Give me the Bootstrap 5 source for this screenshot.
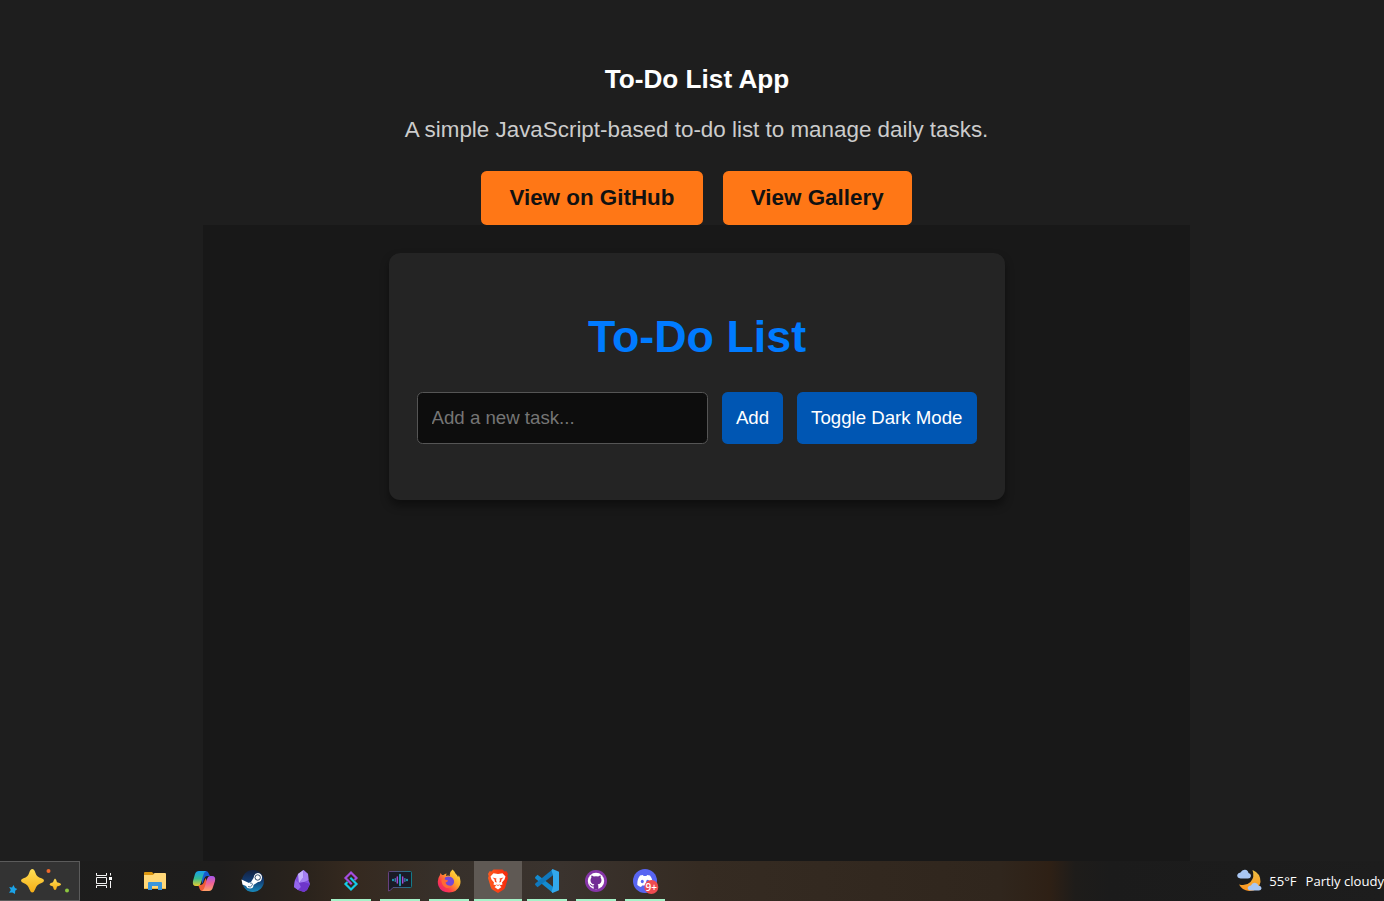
<!DOCTYPE html>
<html lang="en" data-bs-theme="dark">
<head>
<meta charset="utf-8">
<meta name="viewport" content="width=device-width, initial-scale=1">
<title>To-Do List App</title>
<link href="https://cdn.jsdelivr.net/npm/bootstrap@5.3.0/dist/css/bootstrap.min.css" rel="stylesheet">
<style>
html,body{height:100%}
body{background:#1e1e1e;font-family:"Liberation Sans",Arial,sans-serif;font-size:22.4px;overflow:hidden}
.page{padding-left:9px;padding-top:64px;min-height:0}
.title{font-size:26.2px;line-height:30px;color:#fff;margin-bottom:21px;padding-left:1px}
.lede{line-height:30px;color:#ccc;margin-bottom:26px}
.links{gap:20px}
.btn-orange{--bs-btn-bg:#ff7716;--bs-btn-color:#111;--bs-btn-hover-bg:#ff8a38;--bs-btn-hover-color:#111;--bs-btn-font-size:22.4px;--bs-btn-padding-x:28.2px;--bs-btn-padding-y:14px;--bs-btn-border-radius:5.6px;--bs-btn-border-width:0;font-weight:700;line-height:26px}
.demo{width:987px;background:#181818;padding-top:28px}
.todo{width:616px;height:247px;background:#242424;border:0;border-radius:11.2px;padding:57px 28px 0;box-shadow:0 5.6px 8.4px rgba(0,0,0,.4)}
.todo h1{font-size:44.8px;line-height:52px;color:#007bff;margin-bottom:30px;padding-left:1px}
.todo form{gap:14px}
.todo .form-control{height:52px;background:#0d0d0d;border:1px solid #555;border-radius:5.6px;padding:0 14px;font-size:18.67px;color:#fff}
.todo .form-control::placeholder{color:#757575}
.btn-blue{--bs-btn-bg:#0056b3;--bs-btn-color:#fff;--bs-btn-hover-bg:#0064cf;--bs-btn-hover-color:#fff;--bs-btn-font-size:18.67px;--bs-btn-padding-x:14px;--bs-btn-padding-y:0;--bs-btn-border-radius:5.6px;--bs-btn-border-width:0;height:52px;flex:none}
.taskbar{height:40px;background:linear-gradient(90deg,#1c1c1c 0,#1e1d1c 220px,#2a231c 305px,#35291f 350px,#37302a 440px,#3a332e 560px,#352b22 700px,#30261d 1000px,#2e2015 1050px,#1e1c1a 1075px,#1b1b1b 1110px,#1d1d1d 100%)}
.search{width:80px;background:#333;border:1px solid #5b5b5b;border-left:0}
.task{width:48px;height:40px;margin-right:1px}
.task svg{width:24px;height:24px}
.first{margin-right:3px}
.open{background:linear-gradient(#a6f2c8,#a6f2c8) 50% 100%/40px 2px no-repeat}
.active-app{background:linear-gradient(#a6f2c8,#a6f2c8) 50% 100%/48px 2px no-repeat,#5f5954}
.weather{font:13.1px/16px "Open Sans","Noto Sans",sans-serif;color:#fff;white-space:nowrap}
.weather svg{margin-right:7px}
.temp{margin-right:9px}
</style>
</head>
<body class="d-flex flex-column">
<main class="page flex-grow-1 d-flex flex-column align-items-center">
  <h3 class="title fw-bold">To-Do List App</h3>
  <p class="lede">A simple JavaScript-based to-do list to manage daily tasks.</p>
  <div class="links d-flex">
    <a class="btn btn-orange" href="#">View on GitHub</a>
    <a class="btn btn-orange" href="#">View Gallery</a>
  </div>
  <section class="demo flex-grow-1">
    <div class="card todo mx-auto">
      <h1 class="fw-bold text-center">To-Do List</h1>
      <form class="d-flex">
        <input class="form-control" type="text" placeholder="Add a new task...">
        <button class="btn btn-blue" type="button">Add</button>
        <button class="btn btn-blue" type="button">Toggle Dark Mode</button>
      </form>
    </div>
  </section>
</main>
<footer class="taskbar d-flex flex-shrink-0 align-items-center">
  <div class="search h-100">
    <svg class="d-block" width="79" height="38" viewBox="0 1 79 38"><defs><linearGradient id="gold" x2="0" y2="1"><stop stop-color="#ffdf55"/><stop offset="1" stop-color="#f6ae16"/></linearGradient></defs>
      <path fill="url(#gold)" d="M32.300 8Q34.300 8 35.300 11.500Q36.500 16 41.500 17.200Q44 18 44 19.500Q44 21 41.500 22Q36.500 23.500 35.300 28Q34 31.500 32.300 31.500T29.300 28Q28 23.500 23.500 22Q21 21 21 19.500T23.500 17.200Q28 16 29.300 11.500Q30.300 8 32.300 8Z"/>
      <path fill="url(#gold)" d="M55 17.500Q56.300 18 57 21.300Q61 22.300 61 23.500T57 25.500Q56.300 29 55 29T53 25.500Q49.500 24.700 49.500 23.500T53 21.300Q54 18 55 17.500Z"/>
      <path fill="#1ba4e9" d="M13.500 24L15 27L17.300 28L15.200 29.700L15 33L12.300 31.400L9 31.700L10.800 29L9.200 26L12 26.500Z"/><circle cx="48.500" cy="10" r="2" fill="#f26a2a"/><circle cx="67" cy="29.500" r="2" fill="#8cc63f"/></svg>
  </div>
  <div class="task first d-flex align-items-center justify-content-center">
    <svg viewBox="0 0 24 24" fill="none" stroke="#f4f4f4"><path d="M4.500 4V6.500H14.500V4M4.500 19V16.500H14.500V19M4.500 8.500H14.500V14.500H4.500ZM18.500 4V6.500M18.500 12V19"/><path fill="#fff" stroke="none" d="M17 8h3v3h-3z"/></svg>
  </div>
  <div class="task d-flex align-items-center justify-content-center">
    <svg viewBox="0 0 24 24"><path fill="#dc9710" d="M1 4Q1 3 2 3H9L11 5V8H1Z"/><path fill="#ffd878" d="M1 6H10L11.500 4H22Q23 4 23 5V20H1Z"/><path fill="#f0b63b" d="M1 19H23V20H1Z"/><path fill="#3b96dc" d="M5 14Q5 13 6 13H18Q19 13 19 14V21H15V17H9V21H5Z"/></svg>
  </div>
  <div class="task d-flex align-items-center justify-content-center">
    <svg viewBox="0 0 24 24"><defs><linearGradient id="cp1" x2="0" y2="1"><stop stop-color="#169ff0"/><stop offset=".5" stop-color="#35bd91"/><stop offset="1" stop-color="#e8cb2d"/></linearGradient><linearGradient id="cp2" x2="0" y2="1"><stop stop-color="#a456ed"/><stop offset=".5" stop-color="#f06494"/><stop offset="1" stop-color="#ffa168"/></linearGradient></defs><path fill="#165bd0" d="M7 2H14Q16 2 17 5L18 7H15Q13 7 12 10L10.500 15L8 5Z"/><path fill="#f05c37" d="M17 22H10Q8 22 7 18L6 16H9Q11 16 12 13L13.500 9L17 17Z"/><path fill="url(#cp1)" d="M7 2H14Q12 3 11 7L9 14Q8 17 6 17H4Q0 17 1 12L3 5Q4 2 7 2Z"/><path fill="url(#cp2)" d="M17 22H10Q12 21 13 17L15 10Q16 7 18 7H20Q24 7 23 12L21 18Q20 22 17 22Z"/></svg>
  </div>
  <div class="task d-flex align-items-center justify-content-center">
    <svg viewBox="0 0 24 24"><defs><linearGradient id="steam" x2="0" y2="1"><stop stop-color="#14213f"/><stop offset=".5" stop-color="#123c72"/><stop offset="1" stop-color="#188bbd"/></linearGradient></defs><circle cx="12" cy="12" r="11" fill="url(#steam)"/><path fill="#fff" d="M.5 10.500L8 14Q9 13 10 13L12.500 9Q13 4 17 4Q21 4.500 21 8.500Q20.500 13 17 13L12.500 16Q12.500 19.500 9 19.500Q6 19.500 5 17L1.500 15.500Z"/><circle cx="16.700" cy="8.500" r="2.700" fill="#fff" stroke="#1a3558" stroke-width=".9"/><path d="M7 17.500Q9.500 19 11 16.500T9 14" fill="none" stroke="#1a4773" stroke-width=".8"/></svg>
  </div>
  <div class="task d-flex align-items-center justify-content-center">
    <svg viewBox="0 0 24 24"><path fill="#8250df" d="M13.500 1L18 5L18.500 11L20 15L17 21L14 23L8 21L4 18L5 11L8 5Z"/><path fill="#c4b1fb" d="M13.500 1L13 9L9 14L8 5Z"/><path fill="#a580f2" d="M13.500 1L18 5L18.500 11L14 13L9 14L13 9Z"/><path fill="#9466ed" d="M4 18L5 11L9 14L11 18L8 21Z"/><path fill="#6e35ca" d="M9 14L14 13L20 15L17 21L14 23L8 21L11 18Z"/></svg>
  </div>
  <div class="task open d-flex align-items-center justify-content-center">
    <svg viewBox="0 0 24 24" fill="none" stroke-width="2.200"><path stroke="#14cce7" d="M11.300 8.800L17.500 15L12 20.500L6.500 15L8.500 13"/><path stroke="#a34de0" d="M15.500 11L17.500 9L12 3.500L6.500 9L12.700 15.200"/></svg>
  </div>
  <div class="task open d-flex align-items-center justify-content-center">
    <svg viewBox="0 0 24 24"><defs><linearGradient id="vc"><stop stop-color="#67407e"/><stop offset="1" stop-color="#147b89"/></linearGradient></defs><path fill="#191b26" stroke="url(#vc)" d="M1.500 2.500Q.5 2.500 .5 3.500V22Q2.500 22 5 18.500H22.500Q23.500 18.500 23.500 17.500V3.500Q23.500 2.500 22.500 2.500Z"/><g stroke-width="1.500" stroke-linecap="round"><path stroke="#23bfe2" d="M5 10.500V11.500M12 5.500V16.500M19 10.500V11.500"/><path stroke="#a24bd5" d="M9.300 8V14M14.700 8V14"/><path stroke="#4e9fe0" stroke-width="1" d="M7.200 9.500V12.500M16.900 9.500V12.500"/></g></svg>
  </div>
  <div class="task open d-flex align-items-center justify-content-center">
    <svg viewBox="0 0 24 24"><defs><linearGradient id="ff" x1="1" x2="0" y2="1"><stop stop-color="#fff04a"/><stop offset=".4" stop-color="#ffa829"/><stop offset=".7" stop-color="#ff3b48"/><stop offset="1" stop-color="#db168e"/></linearGradient></defs><path fill="url(#ff)" d="M15.500 .5Q17.500 2 18.500 4.500Q20.500 6 21 8Q22 7 21.700 6Q24.500 11 23 16Q20 23.500 12 23.500Q4 23.500 1.500 17Q-.5 11 3 6L3.500 4L5 6L6.500 6Q8 4.500 9.500 4.500L9 7Q11 6 13 7Q12 3.500 15.500 .5Z"/><path fill="#7547d6" d="M8 8.500Q13 6 16 9.500Q18.500 13 15.500 16Q12 18.500 8.500 16Q6 13 7.500 10.500Z"/><path fill="#ff6a34" d="M4.500 10.500Q7 9.500 9 11Q11.500 11 11 12Q10 13.300 8.500 13.500Q9.500 17 14 16.700L15 17.300Q12 20 8.500 18.500Q4 16 4.500 10.500Z"/></svg>
  </div>
  <div class="task active-app d-flex align-items-center justify-content-center">
    <svg viewBox="0 0 24 24"><defs><linearGradient id="br"><stop stop-color="#ff5b20"/><stop offset="1" stop-color="#f5280c"/></linearGradient></defs><path fill="url(#br)" d="M7.500 .5H16.500L18.500 2.500L20.500 2.300L22 5L21.300 7L22 9L19.500 17.500Q19 20 16.500 21.300L12 24L7.500 21.300Q5 20 4.500 17.500L2 9L2.700 7L2 5L3.500 2.300L5.500 2.500Z"/><path fill="#fff" d="M7.500 4.200L12 5L16.500 4.200L19.500 7.500L18.500 10.500L16 13.500L16.500 15.500L13.500 16.500L15.500 18L12 20.500L8.500 18L10.500 16.500L7.500 15.500L8 13.500L5.500 10.500L4.500 7.500Z"/><path fill="#ff4920" d="M6.500 8.500L10.500 9.500L10 11L10.800 13.500L9 13L8.500 10.500ZM17.500 8.500L13.500 9.500L14 11L13.200 13.500L15 13L15.500 10.500ZM9.500 15L12 16L14.500 15L12 17Z"/></svg>
  </div>
  <div class="task open d-flex align-items-center justify-content-center">
    <svg viewBox="0 0 24 24"><path fill="#148bd0" d="M0 8.300L2.500 5.800L18 17.700V24L.5 9.800Z"/><path fill="#1078bd" d="M0 15.700L2.500 18.200L18 6.300V0L.5 14.200Z"/><path fill="#32a9ed" d="M17.500 0L24 2.700V21.300L17.500 24L16.500 22.500L18 18V6L16.500 1.500Z"/></svg>
  </div>
  <div class="task open d-flex align-items-center justify-content-center">
    <svg viewBox="0 0 24 24"><circle cx="12" cy="12" r="11" fill="#8635a8"/><circle cx="12" cy="12" r="8.200" fill="#fff"/><path fill="#722d94" d="M9.700 20V17.500Q7 18 6.200 15.800L5.200 14.700Q6.500 14.500 7.500 16Q8.500 17 9.800 16.300L10.300 15.300Q6.500 14.800 6.500 11.200Q6.500 9.800 7.400 8.800Q7 7.500 7.500 6.500Q8.500 6.500 9.800 7.500Q12 7 14.200 7.500Q15.500 6.500 16.500 6.500Q17 7.500 16.600 8.800Q17.500 9.800 17.500 11.200Q17.500 14.800 13.700 15.300Q14.300 16 14.300 17V20Z"/></svg>
  </div>
  <div class="task open d-flex align-items-center justify-content-center">
    <svg class="overflow-visible" viewBox="0 0 24 24"><circle cx="12" cy="12" r="12" fill="#5865f2"/><path fill="#fff" d="M7 6.500L10 6L10.500 7H13.500L14 6L17 6.500Q20 10.500 19.700 16Q18 17.500 16 18L14.800 16.500H9.200L8 18Q6 17.500 4.300 16Q4 10.500 7 6.500Z"/><ellipse cx="9.300" cy="12.500" rx="1.500" ry="1.800" fill="#5865f2"/><ellipse cx="14.700" cy="12.500" rx="1.500" ry="1.800" fill="#5865f2"/><circle cx="18.300" cy="18" r="7" fill="#ed4b50"/><text x="18.300" y="21.700" fill="#fff" text-anchor="middle" font-family="Open Sans,sans-serif" font-weight="600" font-size="10">9+</text></svg>
  </div>
  <div class="weather d-flex align-items-center ms-auto">
    <svg width="26" height="26" viewBox="0 0 26 26"><defs><linearGradient id="moon" x2="0" y2="1"><stop stop-color="#edc044"/><stop offset="1" stop-color="#ff931d"/></linearGradient></defs><path fill="url(#moon)" d="M16.500 2Q24.500 5 24.500 14Q23 23 13 23Q6 22 3 16.500Q10 18.500 14.500 14Q19 9 16.500 2Z"/><path fill="#a9c7f4" d="M4.500 10.500Q1 10 1.200 7Q2 4.500 4.500 4.500Q6 1.500 9 1.700Q12 2 12.500 5Q15 5.500 15 8Q14.500 10.500 12 10.500ZM14.500 22.500Q11.500 22 11.700 19.500Q12.500 17.500 15 17.500Q16 14.500 19 14.700Q22 15 22.500 17.700Q25.500 18 25.500 20.500Q25 22.500 23 22.500Z"/></svg>
    <span class="temp">55°F</span><span>Partly cloudy</span>
  </div>
</footer>
<script src="https://cdn.jsdelivr.net/npm/bootstrap@5.3.0/dist/js/bootstrap.bundle.min.js"></script>
</body>
</html>
